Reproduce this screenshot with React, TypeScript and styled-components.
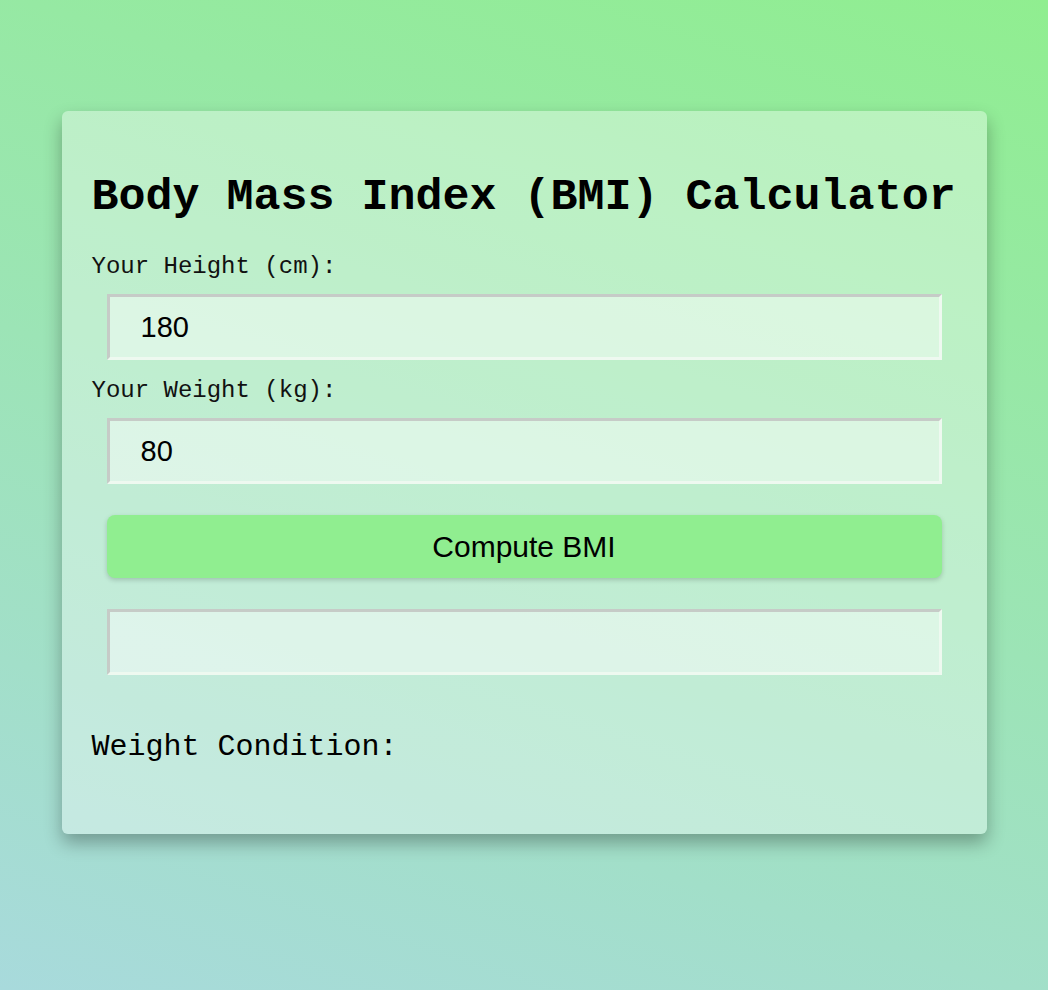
import React, { useState } from "react";
import styled, { createGlobalStyle } from "styled-components";

const GlobalStyle = createGlobalStyle`
  html, body {
    margin: 0;
    padding: 0;
  }
  body {
    min-height: 100vh;
    background: linear-gradient(18deg, #a8dadc, #90ee90);
    font-family: "Liberation Mono", "Courier New", monospace;
    color: #000;
  }
`;

const Page = styled.div`
  display: flex;
  justify-content: center;
  padding-top: 111px;
  padding-bottom: 40px;
`;

const Card = styled.div`
  width: 925px;
  box-sizing: border-box;
  padding: 30px;
  border-radius: 6px;
  background: rgba(255, 255, 255, 0.36);
  box-shadow: 0 9px 18px rgba(0, 0, 0, 0.3);
  display: flex;
  flex-direction: column;
`;

const Title = styled.h1`
  margin: 31px 0 12px 0;
  font-family: "Liberation Mono", "Courier New", monospace;
  font-weight: bold;
  font-size: 45px;
  line-height: 52px;
  white-space: nowrap;
`;

const Label = styled.label`
  display: block;
  margin: 17px 0 0 0;
  font-family: "Liberation Mono", "Courier New", monospace;
  font-size: 24px;
  line-height: 28px;
  color: #111;
`;

const Field = styled.input<{ $gap?: number }>`
  display: block;
  box-sizing: border-box;
  margin: ${(p) => p.$gap ?? 13}px 15px 0 15px;
  height: 66px;
  padding: 0 31px;
  border-style: solid;
  border-width: 3px;
  border-color: #c6cbc7 #eef9f0 #eef9f0 #c6cbc7;
  background: rgba(255, 255, 255, 0.45);
  font-family: "Liberation Sans", Arial, sans-serif;
  font-size: 29px;
  color: #000;
  outline: none;
`;

const Button = styled.button`
  display: block;
  margin: 31px 15px 0 15px;
  height: 63px;
  border: none;
  border-radius: 8px;
  background: #90ee90;
  box-shadow: 0 2px 5px rgba(0, 0, 0, 0.18);
  font-family: "Liberation Sans", Arial, sans-serif;
  font-size: 30px;
  color: #000;
  cursor: pointer;
`;

const Condition = styled.p`
  margin: 55px 0 40px 0;
  font-family: "Liberation Mono", "Courier New", monospace;
  font-size: 30px;
  line-height: 34px;
`;

export default function App() {
  const [height, setHeight] = useState("180");
  const [weight, setWeight] = useState("80");
  const [result, setResult] = useState("");
  const [condition, setCondition] = useState("");

  const compute = () => {
    const h = parseFloat(height) / 100;
    const w = parseFloat(weight);
    if (!h || !w) return;
    const bmi = w / (h * h);
    setResult(bmi.toFixed(2));
    setCondition(
      bmi < 18.5 ? "Underweight" : bmi < 25 ? "Normal weight" : bmi < 30 ? "Overweight" : "Obesity"
    );
  };

  return (
    <>
      <GlobalStyle />
      <Page>
        <Card>
          <Title>Body Mass Index (BMI) Calculator</Title>
          <Label htmlFor="h">Your Height (cm):</Label>
          <Field id="h" type="text" value={height} onChange={(e) => setHeight(e.target.value)} />
          <Label htmlFor="w">Your Weight (kg):</Label>
          <Field id="w" type="text" value={weight} onChange={(e) => setWeight(e.target.value)} />
          <Button onClick={compute}>Compute BMI</Button>
          <Field $gap={31} type="text" readOnly value={result} />
          <Condition>Weight Condition: {condition}</Condition>
        </Card>
      </Page>
    </>
  );
}
